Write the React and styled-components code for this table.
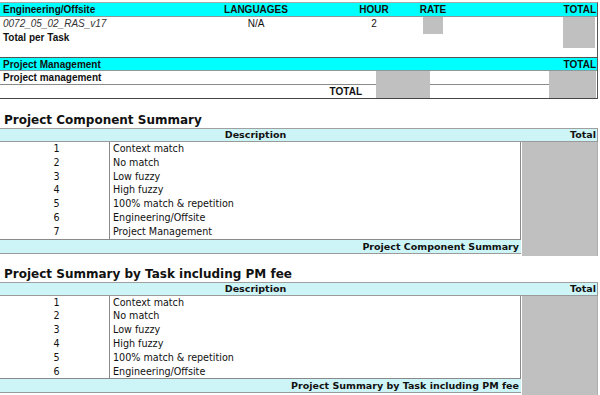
import React from "react";
import styled, { createGlobalStyle } from "styled-components";

const GlobalStyle = createGlobalStyle`
	html, body {
		margin: 0;
		padding: 0;
		background: #ffffff;
	}
	body {
		font-family: "Liberation Sans", Arial, sans-serif;
		color: #111111;
	}
`;

const Page = styled.div`
	width: 600px;
	height: 395px;
	overflow: hidden;
	padding-top: 2px;
	box-sizing: border-box;
`;

// top part: task block + project management block
const Sheet = styled.div`
	width: 598px;
	border-top: 1px solid #a8a8a8;
	border-right: 1px solid #555555;
	border-bottom: 1px solid #444444;
	box-sizing: border-box;
	font-family: "Liberation Sans", Arial, sans-serif;
	font-size: 10px;
`;

const TaskGrid = styled.div`
	display: grid;
	grid-template-columns: 200px 112px 32px 60px 58px 101px 34px;
	grid-template-rows: 14px 14px 14px 12px;
`;

const HeadCell = styled.div`
	background: #00ffff;
	border-bottom: 1px solid #8a9a9a;
	box-sizing: border-box;
	font-weight: 700;
	line-height: 13px;
	white-space: nowrap;
	padding: 0 ${(p) => (p.$align === "right" ? "1px" : "0")} 0 ${(p) => (p.$align === "left" ? "3px" : "0")};
	text-align: ${(p) => p.$align || "center"};
`;

const Cell = styled.div`
	line-height: 14px;
	white-space: nowrap;
	padding-left: ${(p) => (p.$align === "left" ? "3px" : "0")};
	text-align: ${(p) => p.$align || "center"};
	font-weight: ${(p) => (p.$bold ? 700 : 400)};
	font-style: ${(p) => (p.$italic ? "italic" : "normal")};
	color: ${(p) => (p.$italic ? "#333333" : "#111111")};
`;

const GrayBox = styled.div`
	background: #c0c0c0;
	width: ${(p) => p.$w}px;
	height: ${(p) => p.$h}px;
	align-self: start;
`;

const Slot = styled.div`
	display: flex;
	justify-content: ${(p) => p.$justify || "center"};
	grid-row: span ${(p) => p.$rows || 1};
`;

const PMHeader = styled.div`
	display: flex;
	justify-content: space-between;
	background: #00ffff;
	border-top: 1px solid #555555;
	border-bottom: 1px solid #8a9a9a;
	height: 14px;
	box-sizing: border-box;
	line-height: 13px;
	font-weight: 700;
	padding: 0 1px 0 3px;
`;

const PMGrid = styled.div`
	display: grid;
	grid-template-columns: 376px 54px 119px 48px;
	grid-template-rows: 14px 13px;
`;

const PMCell = styled.div`
	box-sizing: border-box;
	border-bottom: ${(p) => (p.$line ? "1px solid #8a8a8a" : "none")};
	line-height: 13px;
	font-weight: 700;
	white-space: nowrap;
	text-align: ${(p) => p.$align || "left"};
	padding: 0 ${(p) => (p.$align === "right" ? "14px" : "0")} 0 ${(p) => (p.$align === "right" ? "0" : "3px")};
`;

const GrayFill = styled.div`
	background: #c0c0c0;
	grid-row: span 2;
	margin-right: ${(p) => (p.$edge ? "1px" : "0")};
`;

// summary blocks
const Section = styled.div`
	width: 598px;
	margin-top: ${(p) => p.$gap}px;
	font-family: "DejaVu Sans", Verdana, sans-serif;
`;

const Title = styled.div`
	font-size: 12px;
	font-weight: 700;
	line-height: 15px;
	padding-left: 4px;
	color: #111111;
`;

const SumHeader = styled.div`
	display: grid;
	grid-template-columns: 521px 1fr;
	background: #cdf5f7;
	border-top: 1px solid #a0a0a0;
	border-bottom: 1px solid #9a9a9a;
	border-right: 1px solid #9a9a9a;
	height: 14px;
	box-sizing: border-box;
	font-size: 9.5px;
	font-weight: 700;
	line-height: 12px;
`;

const HeadText = styled.div`
	text-align: ${(p) => p.$align};
	padding-right: ${(p) => (p.$align === "center" ? "10px" : "1px")};
`;

const SumBody = styled.div`
	display: grid;
	grid-template-columns: 521px 1fr;
	align-items: start;
`;

const RowList = styled.div`
	border-right: 1px solid #8a8a8a;
	border-bottom: 1px solid #8a8a8a;
`;

const Row = styled.div`
	display: grid;
	grid-template-columns: 110px 1fr;
	height: 13.8px;
	font-size: 9.6px;
	line-height: 13.8px;
`;

const Num = styled.div`
	text-align: center;
	border-right: 1px solid #8a8a8a;
	padding-left: 4px;
`;

const Desc = styled.div`
	padding-left: 3px;
	white-space: nowrap;
`;

const Footer = styled.div`
	background: #cdf5f7;
	border-bottom: 1px solid #9a9a9a;
	height: 14px;
	box-sizing: border-box;
	text-align: right;
	padding-right: 2px;
	font-size: 9.5px;
	font-weight: 700;
	line-height: 13px;
	white-space: nowrap;
`;

const TotalColumn = styled.div`
	background: #c0c0c0;
	align-self: stretch;
	margin-bottom: -2px;
	margin-left: 1px;
	border-right: 1px solid #b0b0b0;
`;

const Summary = ({ title, items, footer, gap }) => (
	<Section $gap={gap}>
		<Title>{title}</Title>
		<SumHeader>
			<HeadText $align="center">Description</HeadText>
			<HeadText $align="right">Total</HeadText>
		</SumHeader>
		<SumBody>
			<div>
				<RowList>
					{items.map((item, i) => (
						<Row key={item}>
							<Num>{i + 1}</Num>
							<Desc>{item}</Desc>
						</Row>
					))}
				</RowList>
				<Footer>{footer}</Footer>
			</div>
			<TotalColumn />
		</SumBody>
	</Section>
);

const components = [
	"Context match",
	"No match",
	"Low fuzzy",
	"High fuzzy",
	"100% match & repetition",
	"Engineering/Offsite",
	"Project Management",
];

const App = () => {
	return (
		<Page>
			<GlobalStyle />
			<Sheet>
				<TaskGrid>
					<HeadCell $align="left">Engineering/Offsite</HeadCell>
					<HeadCell>LANGUAGES</HeadCell>
					<HeadCell />
					<HeadCell>HOUR</HeadCell>
					<HeadCell>RATE</HeadCell>
					<HeadCell />
					<HeadCell $align="right">TOTAL</HeadCell>

					<Cell $align="left" $italic>0072_05_02_RAS_v17</Cell>
					<Cell>N/A</Cell>
					<Cell />
					<Cell>2</Cell>
					<Slot $rows={2}>
						<GrayBox $w={20} $h={17} />
					</Slot>
					<Cell />
					<Slot $rows={3} $justify="flex-start">
						<GrayBox $w={32} $h={31} />
					</Slot>

					<Cell $align="left" $bold>Total per Task</Cell>
					<Cell />
					<Cell />
					<Cell />
					<Cell />
				</TaskGrid>
				<PMHeader>
					<span>Project Management</span>
					<span>TOTAL</span>
				</PMHeader>
				<PMGrid>
					<PMCell $line>Project management</PMCell>
					<GrayFill />
					<PMCell $line />
					<GrayFill $edge />
					<PMCell $align="right">TOTAL</PMCell>
					<PMCell />
				</PMGrid>
			</Sheet>
			<Summary
				gap={14}
				title="Project Component Summary"
				items={components}
				footer="Project Component Summary"
			/>
			<Summary
				gap={13}
				title="Project Summary by Task including PM fee"
				items={components.slice(0, 6)}
				footer="Project Summary by Task including PM fee"
			/>
		</Page>
	);
};

export default App;
